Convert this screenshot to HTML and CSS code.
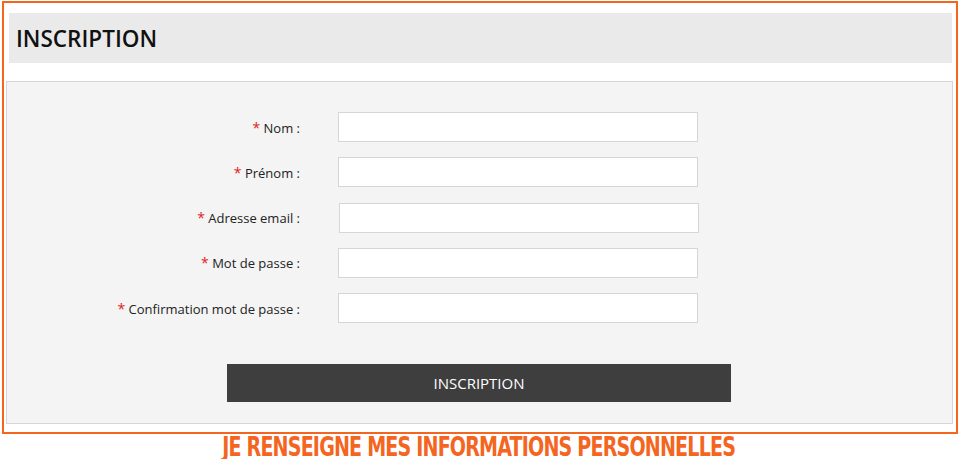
FILE: index.html
```html
<!DOCTYPE html>
<html lang="fr">
<head>
<meta charset="utf-8">
<title>Inscription</title>
<link rel="stylesheet" href="styles.css">
</head>
<body>
<div class="frame">
  <div class="header"><h1>INSCRIPTION</h1></div>
  <div class="panel">
    <form class="form">
      <div class="row"><label><span class="req">*</span> Nom :</label><input type="text"></div>
      <div class="row"><label><span class="req">*</span> Prénom :</label><input type="text"></div>
      <div class="row"><label><span class="req">*</span> Adresse email :</label><input type="text" class="shift"></div>
      <div class="row"><label><span class="req">*</span> Mot de passe :</label><input type="password"></div>
      <div class="row"><label><span class="req">*</span> Confirmation mot de passe :</label><input type="password"></div>
      <div class="actions"><button type="button">INSCRIPTION</button></div>
    </form>
  </div>
</div>
<div class="caption"><span>JE RENSEIGNE MES INFORMATIONS PERSONNELLES</span></div>
</body>
</html>
```
FILE: styles.css
```css
* { box-sizing: border-box; }
html, body { margin: 0; padding: 0; background: #fff; }
body { font-family: "Open Sans", "Noto Sans", sans-serif; color: #222; }

.frame {
  margin: 1px 0 0 2px;
  width: 956px;
  height: 433px;
  border: 2px solid #f4661f;
  display: flex;
  flex-direction: column;
}

.header {
  margin: 10px 4px 0 5px;
  height: 50px;
  background: #eaeaea;
  display: flex;
  align-items: center;
  padding-left: 7px;
}
.header h1 {
  margin: 0;
  font-size: 22.5px;
  font-weight: 600;
  color: #111;
}

.panel {
  margin: 18px 3px 0 2px;
  height: 343px;
  background: #f4f4f4;
  border: 1px solid #d6d6d6;
  padding-top: 30px;
}

.form { display: flex; flex-direction: column; gap: 15.25px; }
.row { display: flex; align-items: center; height: 30px; }
.row label {
  width: 293px;
  text-align: right;
  font-size: 13px;
  color: #222;
  margin-right: 38px;
}
.req { color: #e21b1b; font-size: 14px; }
.row input {
  width: 360px;
  height: 30px;
  border: 1px solid #d6d6d6;
  background: #fff;
  margin: 0;
  padding: 0 6px;
}
.row input.shift { margin-left: 1px; }

.actions { display: flex; justify-content: center; margin-top: 26px; }
.actions button {
  width: 504px;
  height: 38px;
  background: #3e3e3e;
  color: #fff;
  border: 0;
  font-family: "Open Sans", sans-serif;
  font-size: 15px;
  margin-right: 1px;
}

.caption {
  width: 956px;
  margin: 1px 0 0 1px;
  text-align: center;
  line-height: 24px;
  height: 24px;
}
.caption span {
  display: inline-block;
  font-family: "DejaVu Sans Condensed", "DejaVu Sans", sans-serif;
  font-weight: bold;
  font-size: 26px;
  line-height: 24px;
  color: #f4661f;
  letter-spacing: -1px;
  transform: scaleX(0.815);
  transform-origin: center;
  white-space: nowrap;
}
```
